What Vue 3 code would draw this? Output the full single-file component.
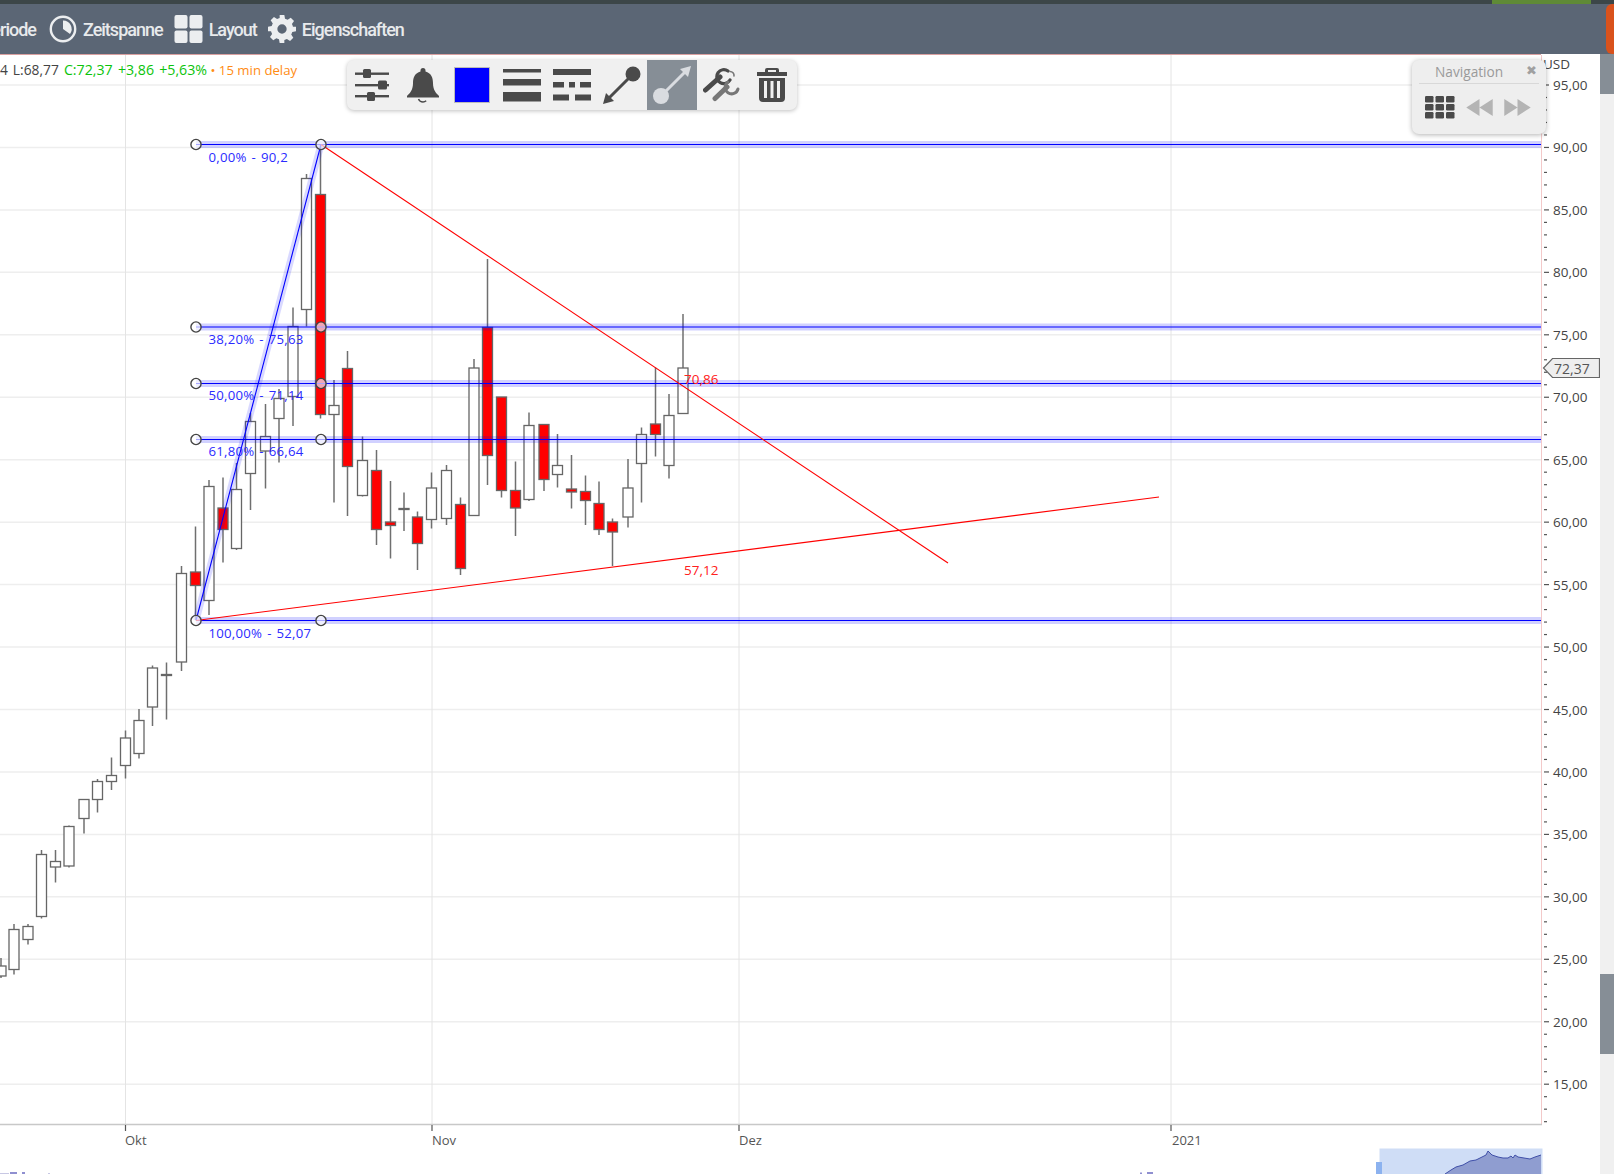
<script setup>
const priceY = (p) => 85 + (95 - p) * 12.49
const majors = []
for (let p = 95; p >= 15; p -= 5) majors.push({ p, y: priceY(p), label: p + ',00' })
const minors = []
for (let p = 94; p >= 12; p--) if (p % 5 !== 0) minors.push(priceY(p))
const vgrid = [125.5, 432, 739, 1171]
const dates = [
  { x: 125, t: 'Okt' }, { x: 432, t: 'Nov' }, { x: 739, t: 'Dez' }, { x: 1172, t: '2021' }
]
// x, wick top, body top, body bottom, wick bottom, kind (0 white, 1 red)
const candles = [
  [1, 958, 966, 976, 978, 0], [14, 924, 929.5, 969.5, 974.5, 0], [28, 924, 926.5, 939.5, 944.5, 0],
  [41.5, 850, 854.5, 916.5, 918.5, 0], [55.5, 850, 861.5, 867, 882.5, 0], [69, 825.5, 826.5, 866, 867.5, 0],
  [84, 799, 799.5, 818.5, 833.5, 0], [97.5, 779, 781.5, 799.5, 812.5, 0], [111.5, 757.5, 775.5, 781.5, 790, 0],
  [125.5, 730.5, 738, 765.5, 778.5, 0], [139, 709, 720.5, 753.5, 758.5, 0], [152.5, 665.5, 668, 707, 726, 0],
  [166.5, 662.5, 674.5, 675.5, 719.5, 0], [181.5, 566, 573.5, 662, 671, 0], [195.5, 526.5, 572, 585.5, 620, 1],
  [209, 480, 486.5, 600.5, 615, 0], [223, 477.5, 508, 529.5, 562.5, 1], [236.5, 463, 489.5, 548.5, 550, 0],
  [250.5, 413, 421.5, 473.5, 510, 0], [265.5, 404, 436.5, 451, 488.5, 0], [279, 389, 398.5, 418.5, 462.5, 0],
  [293, 307.5, 326.5, 396.5, 426, 0], [306.5, 174, 178.5, 309.5, 326.5, 0], [320.5, 145, 194.5, 414.5, 418.5, 1],
  [334, 380, 405.5, 414.5, 502.5, 0], [347.5, 351, 368.5, 466.5, 516, 1], [362.5, 436.5, 460.5, 495.5, 496.5, 0],
  [376.5, 450, 470.5, 529.5, 545, 1], [390.5, 481, 522, 525.5, 558.5, 1], [404, 492.5, 508.5, 509.5, 531, 0],
  [417.5, 511.5, 517, 543.5, 570, 1], [431.5, 472.5, 488, 519.5, 528.5, 0], [446.5, 465, 470.5, 518.5, 525, 0],
  [460.5, 497.5, 504.5, 568.5, 575, 1], [474, 359, 368, 515.5, 515.5, 0], [487.5, 259, 327.5, 455.5, 485, 1],
  [501.5, 397, 397, 490.5, 497.5, 1], [515.5, 461.5, 490.5, 508, 536, 1], [529, 412.5, 425.5, 499.5, 501, 0],
  [544, 424, 424.5, 479.5, 491, 1], [557.5, 434, 465.5, 474.5, 487.5, 0], [571.5, 455, 489, 492, 508.5, 1],
  [585.5, 475.5, 491.5, 500.5, 525, 1], [599, 481.5, 503.5, 529.5, 535, 1], [612.5, 518.5, 522, 532, 566, 1],
  [628, 459, 488, 517, 527.5, 0], [641.5, 427.5, 434.5, 463.5, 502.5, 0], [655.5, 367.5, 424, 434.5, 456.5, 1],
  [669, 394, 415.5, 465.5, 478.5, 0], [683, 314, 368, 413.5, 413.5, 0]
]
const fibs = [
  { y: 144.5, t: '0,00% - 90,2', ly: 157 },
  { y: 327, t: '38,20% - 75,63', ly: 339 },
  { y: 383.5, t: '50,00% - 71,14', ly: 395 },
  { y: 439.5, t: '61,80% - 66,64', ly: 451 },
  { y: 620.5, t: '100,00% - 52,07', ly: 633 }
]
const miniTop = 'M1445 1174 L1451 1170 L1456 1167 L1463 1165 L1470 1161 L1476 1160 L1482 1157 L1486 1155 L1488 1151 L1492 1155 L1498 1157 L1503 1158 L1508 1158 L1511 1156 L1513 1158 L1515 1155 L1518 1157 L1524 1158 L1530 1159 L1535 1157 L1541 1155'
</script>

<template>
  <div class="page">
    <div class="topstrip"><div class="green"></div></div>
    <header class="bar">
      <div class="menu">
        <span class="mi">Periode</span>
        <span class="mi first">
          <svg width="28" height="28" viewBox="0 0 28 28"><circle cx="14" cy="14" r="12.2" fill="none" stroke="#eceef0" stroke-width="2.4"/><path d="M14 5.5 A8.5 8.5 0 0 1 21 19 L14 14 Z" fill="#eceef0"/></svg>
          Zeitspanne
        </span>
        <span class="mi">
          <svg width="29" height="30" viewBox="0 0 30 30"><rect x="0.5" y="0.5" width="13.5" height="14" rx="2" fill="#eceef0"/><rect x="16" y="0.5" width="13.5" height="14" rx="2" fill="#eceef0"/><rect x="0.5" y="16.5" width="13.5" height="13" rx="2" fill="#eceef0"/><rect x="16" y="16.5" width="13.5" height="13" rx="2" fill="#eceef0"/></svg>
          Layout
        </span>
        <span class="mi">
          <svg width="28" height="28" viewBox="0 0 24 24"><path fill="#eceef0" fill-rule="evenodd" d="M10 0h4l.6 3.2c.8.2 1.5.5 2.2.9l2.7-1.8 2.8 2.8-1.8 2.7c.4.7.7 1.4.9 2.2L24 10v4l-3.2.6c-.2.8-.5 1.5-.9 2.2l1.8 2.7-2.8 2.8-2.7-1.8c-.7.4-1.4.7-2.2.9L14 24h-4l-.6-3.2c-.8-.2-1.5-.5-2.2-.9l-2.7 1.8-2.8-2.8 1.8-2.7c-.4-.7-.7-1.4-.9-2.2L0 14v-4l3.2-.6c.2-.8.5-1.5.9-2.2L2.300 4.5l2.800-2.800 2.700 1.800c.7-.4 1.400-.7 2.200-.9L10 0zm2 8a4 4 0 1 0 0 8 4 4 0 0 0 0-8z"/></svg>
          Eigenschaften
        </span>
      </div>
      <div class="orange"></div>
    </header>

    <div class="main">
      <div class="chartwrap">
        <svg class="chart" width="1600" height="1120" viewBox="0 54 1600 1120">
          <g stroke="#eeeeee" stroke-width="1.5">
            <line v-for="m in majors" :key="m.p" x1="0" x2="1541" :y1="m.y" :y2="m.y" />
          </g>
          <g stroke="#e4e4e4" stroke-width="1">
            <line v-for="x in vgrid" :key="x" :x1="x" :x2="x" y1="55" y2="1124" />
          </g>
          <line x1="1541.5" x2="1541.5" y1="55" y2="1125" stroke="#f3c9c9" />
          <line x1="0" x2="1541" y1="54.5" y2="54.5" stroke="#d9a0a0" />
          <line x1="0" x2="1542" y1="1124.5" y2="1124.5" stroke="#c8c8c8" stroke-width="1.5" />

          <g stroke="#555" stroke-width="1.2">
            <line v-for="m in majors" :key="'t' + m.p" x1="1544" x2="1549" :y1="m.y" :y2="m.y" />
            <line v-for="y in minors" :key="'n' + y" x1="1544" x2="1547" :y1="y" :y2="y" />
            <line v-for="x in vgrid" :key="'v' + x" :x1="x" :x2="x" y1="1125" y2="1131" />
          </g>

          <g v-for="(c, i) in candles" :key="i">
            <line :x1="c[0]" :x2="c[0]" :y1="c[1]" :y2="c[4]" stroke="#6f6f6f" stroke-width="1.5" />
            <rect :x="c[0] - 5" :y="c[2]" width="10" :height="c[3] - c[2]" :fill="c[5] ? '#ff0000' : '#ffffff'" stroke="#666666" stroke-width="1.3" />
          </g>

          <g>
            <line x1="196" y1="620.5" x2="321" y2="144.5" stroke="#0000ff" stroke-opacity="0.15" stroke-width="7" />
            <line x1="196" y1="620.5" x2="321" y2="144.5" stroke="#0000ff" stroke-width="1.1" />
            <g v-for="f in fibs" :key="f.y">
              <line x1="196" x2="1541" :y1="f.y" :y2="f.y" stroke="#0000ff" stroke-opacity="0.18" stroke-width="7" />
              <line x1="196" x2="1541" :y1="f.y" :y2="f.y" stroke="#0000ff" stroke-width="1.1" />
            </g>
          </g>

          <line x1="321" y1="144.5" x2="948" y2="563" stroke="#ff0000" stroke-width="1.1" />
          <line x1="196" y1="620.5" x2="1159" y2="497" stroke="#ff0000" stroke-width="1.1" />

          <g v-for="f in fibs" :key="'h' + f.y" fill="#ffffff" fill-opacity="0.65" stroke="#444" stroke-width="1.4">
            <circle cx="196" :cy="f.y" r="5.1" />
            <circle cx="321" :cy="f.y" r="5.1" />
          </g>

          <text v-for="f in fibs" :key="'l' + f.y" class="fibl" x="208.5" :y="f.ly + 4.5">{{ f.t }}</text>
          <text class="redl" x="684" y="384">70,86</text>
          <text class="redl" x="684" y="575">57,12</text>

          <text v-for="m in majors" :key="'p' + m.p" class="axl" x="1553" :y="m.y + 5">{{ m.label }}</text>
          <text class="axl" x="1543" y="69">USD</text>
          <text v-for="d in dates" :key="d.t" class="axd" :x="d.x" y="1145">{{ d.t }}</text>

          <path d="M1543.5 368 L1552.5 358.5 H1599.5 V377.5 H1552.5 Z" fill="#eeeeee" stroke="#666" stroke-width="1.2" />
          <text class="tagl" x="1554" y="373.5">72,37</text>

          <rect x="1379.5" y="1148.5" width="163" height="26" fill="#cfddf6" />
          <rect x="1376" y="1162" width="6" height="12" fill="#8cb2ef" />
          <path :d="miniTop + ' V1174 Z'" fill="#8f9dd0" />
          <path :d="miniTop" fill="none" stroke="#3f4fa8" />
          <g fill="#8f8fd0">
            <rect x="1140" y="1172.5" width="2" height="1.5" />
            <rect x="1147" y="1172" width="6" height="2" />
            <rect x="0" y="1173" width="9" height="1" fill="#c8c8e4" />
            <rect x="10" y="1172" width="7" height="2" />
            <rect x="22" y="1172" width="3" height="2" />
            <rect x="48" y="1173" width="2" height="1" fill="#c8c8e4" />
          </g>
        </svg>

        <div class="legend">
          <span class="dk">54 L:68,77 </span><span class="gr">C:72,37 +3,86 +5,63%</span><span class="or"> • 15 min delay</span>
        </div>

        <div class="tools">
          <div class="tool">
            <svg width="36" height="34" viewBox="0 0 36 34"><g fill="#4a4a4a"><rect x="1" y="4.5" width="34" height="2.4"/><rect x="1" y="16" width="34" height="2.4"/><rect x="1" y="27" width="34" height="2.4"/><rect x="9" y="1" width="8" height="9" rx="1.5"/><rect x="24" y="12.5" width="9" height="9" rx="1.5"/><rect x="13" y="24" width="8" height="9" rx="1.5"/></g></svg>
          </div>
          <div class="tool">
            <svg class="bell" width="34" height="36" viewBox="0 0 34 36"><path fill="#4a4a4a" d="M17 1a2.5 2.5 0 0 1 2.500 2.500v1C25 6 27 10.5 27 16c0 7 3 10 6 13v1.500H1V29c3-3 6-6 6-13 0-5.500 2-10 7.500-11.500v-1A2.500 2.500 0 0 1 17 1z"/><path fill="none" stroke="#4a4a4a" stroke-width="1.5" d="M12.5 32c.8 2 2.500 3 4.500 3 1.300 0 2.300-.4 3.200-1.200"/></svg>
          </div>
          <div class="tool"><div class="swatch"></div></div>
          <div class="tool">
            <svg width="38" height="34" viewBox="0 0 38 34"><g fill="#4a4a4a"><rect y="1" width="38" height="3.5"/><rect y="11" width="38" height="6.5"/><rect y="24" width="38" height="9.5"/></g></svg>
          </div>
          <div class="tool">
            <svg width="38" height="34" viewBox="0 0 38 34"><g fill="#4a4a4a"><rect y="1" width="38" height="6"/><rect y="14" width="11" height="5.5"/><rect x="16" y="14" width="6" height="5.5"/><rect x="27" y="14" width="11" height="5.5"/><rect y="26.5" width="16" height="6"/><rect x="22" y="26.5" width="16" height="6"/></g></svg>
          </div>
          <div class="tool">
            <svg width="40" height="40" viewBox="0 0 40 40"><g fill="#4a4a4a" stroke="#4a4a4a"><circle cx="31" cy="9" r="7.5" stroke="none"/><line x1="27" y1="13" x2="6" y2="34" stroke-width="3"/><path d="M1 39 L4 28 L12 36 Z" stroke="none"/></g></svg>
          </div>
          <div class="tool active">
            <svg width="40" height="40" viewBox="0 0 40 40"><g fill="#d9dce0" stroke="#d9dce0"><circle cx="9" cy="31" r="8" stroke="none"/><line x1="13" y1="27" x2="34" y2="6" stroke-width="3"/><path d="M39 1 L36 12 L28 4 Z" stroke="none"/></g></svg>
          </div>
          <div class="tool">
            <svg width="38" height="34" viewBox="0 0 38 34">
              <g fill="none" stroke-linecap="round">
                <path d="M2.5 22 L17 9" stroke="#4a4a4a" stroke-width="5"/>
                <path d="M25 3 A7 7 0 1 0 27 12" stroke="#4a4a4a" stroke-width="3.2"/>
                <path d="M27 3.5 A4 4 0 0 1 31 8" stroke="#777" stroke-width="1.6"/>
                <path d="M12 30.5 L24 19" stroke="#777" stroke-width="5"/>
                <path d="M25 14 A6.5 6.5 0 1 0 35 21" stroke="#777" stroke-width="3"/>
              </g>
            </svg>
          </div>
          <div class="tool">
            <svg width="32" height="36" viewBox="0 0 32 36"><g fill="#4a4a4a"><path d="M11 1h10a2 2 0 0 1 2 2v2h8v4H1V5h8V3a2 2 0 0 1 2-2zm1 2v2h8V3z" fill-rule="evenodd"/><path d="M3 11h26v20a4 4 0 0 1-4 4H7a4 4 0 0 1-4-4zm5 3v17h3V14zm6.5 0v17h3V14zm6.5 0v17h3V14z" fill-rule="evenodd"/></g></svg>
          </div>
        </div>

        <div class="nav">
          <div class="navhead"><span class="navtitle">Navigation</span><span class="navx">✖</span></div>
          <div class="navbody">
            <svg width="30" height="23" viewBox="0 0 30 23"><g fill="#4a4a4a"><template v-for="r in 3" :key="r"><rect v-for="k in 3" :key="k" :x="(k - 1) * 10.5" :y="(r - 1) * 8" width="8.5" height="6.5" rx="1.2"/></template></g></svg>
            <svg width="27" height="17" viewBox="0 0 28 18"><path fill="#b4b4b4" d="M14 0v18L0 9zM28 0v18L14 9z"/></svg>
            <svg width="27" height="17" viewBox="0 0 28 18"><path fill="#b4b4b4" d="M0 0v18l14-9zM14 0v18l14-9z"/></svg>
          </div>
        </div>
      </div>
      <aside class="scroll">
        <div class="thumb one"></div>
        <div class="thumb two"></div>
      </aside>
    </div>
  </div>
</template>

<style>
html, body { margin: 0; background: #fff; overflow: hidden; }
</style>

<style scoped>
.page { width: 1614px; height: 1174px; display: flex; flex-direction: column; overflow: hidden; font-family: "Open Sans", "Noto Sans", sans-serif; }
.topstrip { height: 4px; background: #3c4648; position: relative; }
.green { position: absolute; left: 1492px; width: 99px; height: 4px; background: #5f8a37; }
.bar { height: 50px; background: #5b6675; position: relative; display: flex; align-items: center; overflow: hidden; }
.menu { display: flex; align-items: center; gap: 11px; margin-left: -19px; }
.mi { display: flex; align-items: center; gap: 6px; color: #e8eaec; font-family: Roboto, sans-serif; font-weight: 500; font-size: 18px; letter-spacing: -1px; }
.mi.first { margin-left: 2px; }
.orange { position: absolute; left: 1606px; top: 0; width: 20px; height: 50px; border-radius: 6px 0 0 6px; background: #d9521c; }
.main { flex: 1; display: flex; min-height: 0; }
.chartwrap { position: relative; width: 1600px; height: 1120px; }
.chart { display: block; }
.fibl { fill: #2b2bff; font-size: 13.2px; letter-spacing: 0.25px; word-spacing: 1.2px; font-family: "Open Sans", sans-serif; }
.redl { fill: #ff2020; font-size: 13.5px; font-family: "Open Sans", sans-serif; }
.axl { fill: #444; font-size: 13.5px; font-family: "Open Sans", sans-serif; }
.tagl { fill: #555; font-size: 14px; font-family: "Open Sans", sans-serif; }
.axd { fill: #555; font-size: 13px; font-family: "Open Sans", sans-serif; }
.legend { position: absolute; left: -8px; top: 6px; font-size: 13.8px; line-height: 20px; white-space: pre; }
.dk { color: #444; word-spacing: 1.5px; }
.gr { color: #0bc40b; font-size: 14.2px; word-spacing: 1.5px; }
.or { color: #ff8c14; font-size: 13.2px; }
.tools { position: absolute; left: 347px; top: 6px; width: 450px; height: 50px; display: flex; background: #f0f0f0; border-radius: 7px; box-shadow: 0 1px 4px rgba(0,0,0,.25); overflow: hidden; }
.tool { width: 50px; height: 50px; display: flex; align-items: center; justify-content: center; }
.tool.active { background: #868e96; }
.bell { margin-left: 2px; }
.swatch { width: 36px; height: 36px; background: #0000ff; box-shadow: 0 0 0 1px #bbb inset; }
.nav { position: absolute; left: 1412px; top: 6px; width: 134px; height: 74px; background: #eeeeee; border-radius: 7px; box-shadow: 0 1px 5px rgba(0,0,0,.3); box-sizing: border-box; padding: 0 7px; }
.navhead { height: 23px; border-bottom: 1px solid #d8d8d8; display: flex; align-items: center; position: relative; }
.navtitle { color: #9a9a9a; font-size: 13.7px; margin-left: 16px; }
.navx { position: absolute; right: 2px; top: 3px; color: #a0a0a0; font-size: 13px; font-family: "DejaVu Sans", sans-serif; }
.navbody { display: flex; align-items: center; padding: 12px 0 0 6px; gap: 11px; }
.scroll { width: 14px; height: 1120px; background: #f0f0f0; position: relative; }
.thumb { position: absolute; left: 0; width: 14px; background: #868e96; }
.one { top: 0; height: 40px; }
.two { top: 920px; height: 80px; }
</style>
